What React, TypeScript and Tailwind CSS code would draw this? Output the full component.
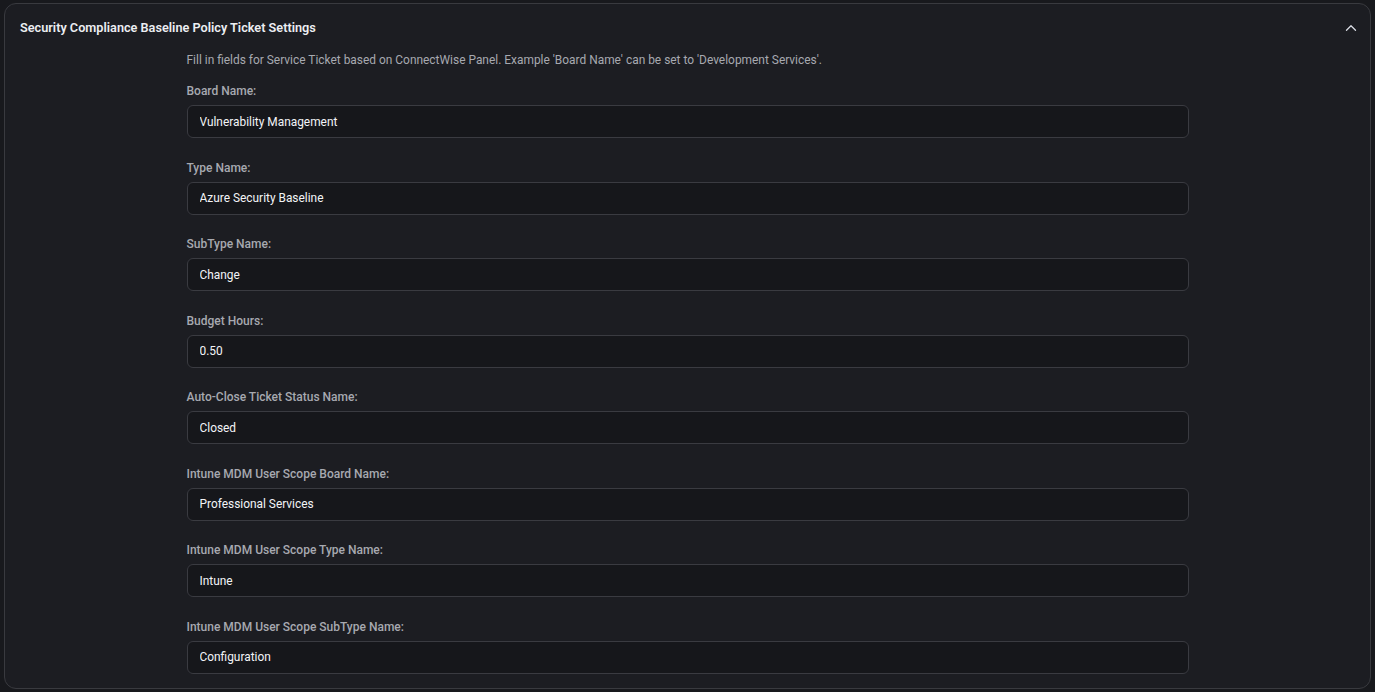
import { ChevronUp } from "lucide-react";

const fields = [
  { label: "Board Name:", value: "Vulnerability Management" },
  { label: "Type Name:", value: "Azure Security Baseline" },
  { label: "SubType Name:", value: "Change" },
  { label: "Budget Hours:", value: "0.50" },
  { label: "Auto-Close Ticket Status Name:", value: "Closed" },
  { label: "Intune MDM User Scope Board Name:", value: "Professional Services" },
  { label: "Intune MDM User Scope Type Name:", value: "Intune" },
  { label: "Intune MDM User Scope SubType Name:", value: "Configuration" },
];

export default function App() {
  return (
    <div
      className="min-h-screen bg-[#18191d] px-1 pt-[3px] pb-1"
      style={{ fontFamily: "Roboto, 'Noto Sans', sans-serif" }}
    >
      <div className="rounded-[12px] border border-[#393a3f] bg-[#1c1d22] h-[686px] overflow-hidden">
        {/* Header */}
        <div className="flex items-center justify-between pl-[15px] pr-[10px] pt-[14px]">
          <h2 className="text-[12.7px] leading-[20px] font-semibold text-[#eceef2]">
            Security Compliance Baseline Policy Ticket Settings
          </h2>
          <ChevronUp size={18} strokeWidth={1.75} className="text-[#d8dbe3]" />
        </div>

        {/* Body */}
        <div className="mx-auto w-[1002px] pt-[14px]">
          <p className="text-[11.93px] leading-[16px] text-[#a7a9b0]">
            Fill in fields for Service Ticket based on ConnectWise Panel. Example 'Board Name' can be set to 'Development Services'.
          </p>

          <div className="mt-[15px] flex flex-col gap-[21.5px]">
            {fields.map((f) => (
              <div key={f.label} className="flex flex-col">
                <label className="text-[12px] leading-[16px] font-medium text-[#a7a9b0] mb-[6px]">
                  {f.label}
                </label>
                <input
                  readOnly
                  value={f.value}
                  className="h-[33px] w-full rounded-[6px] border border-[#3a3b41] bg-[#16171b] px-[12px] text-[11.9px] text-[#f3f4f7] outline-none"
                />
              </div>
            ))}
          </div>
        </div>
      </div>
    </div>
  );
}
